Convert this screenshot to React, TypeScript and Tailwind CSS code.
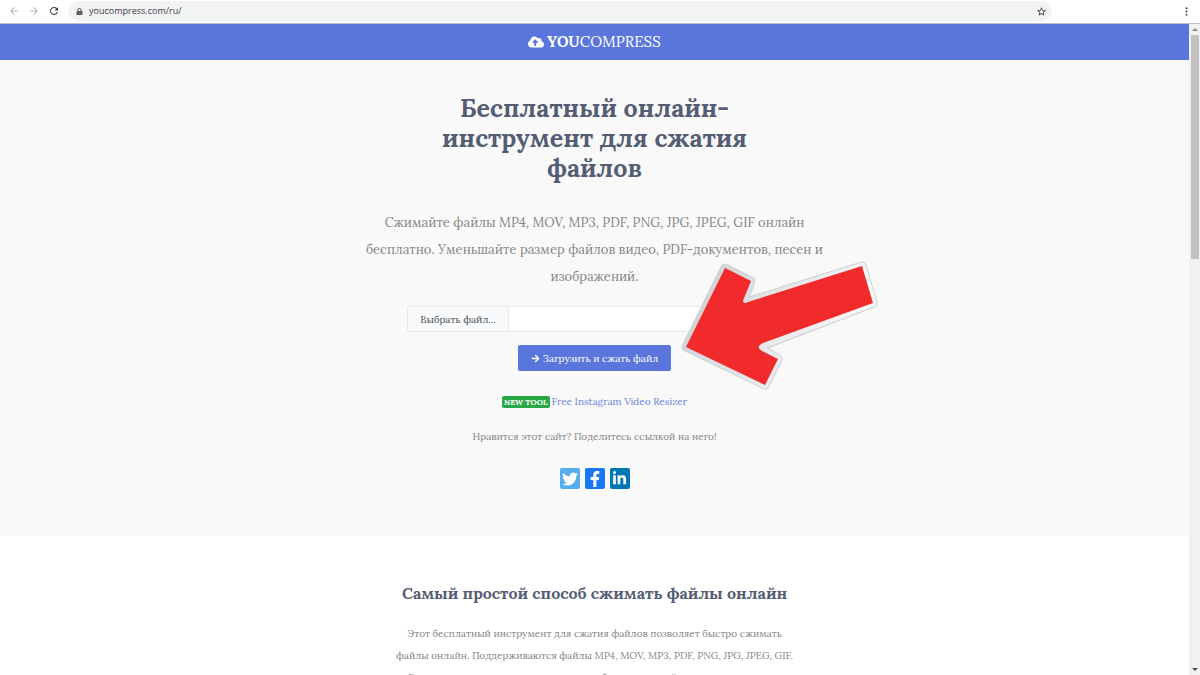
import type { ReactNode } from "react";
import { FaArrowRight, FaCloudUploadAlt, FaFacebookF, FaLinkedinIn, FaLock, FaTwitter } from "react-icons/fa";
import { MdArrowBack, MdArrowForward, MdMoreVert, MdRefresh, MdStarBorder } from "react-icons/md";

function BrowserBar() {
    return (
        <div className="flex h-6 shrink-0 items-center border-b border-[#b9c0d4] bg-white pr-[7px] pb-px pl-2 font-['Open_Sans','Noto_Sans',sans-serif] text-[#5f6368]">
            <button type="button" aria-label="Назад" className="mr-2 text-[#b4b6b9]">
                <MdArrowBack size={12} />
            </button>
            <button type="button" aria-label="Вперёд" className="mr-2 text-[#b4b6b9]">
                <MdArrowForward size={12} />
            </button>
            <button type="button" aria-label="Обновить" className="mr-2 text-[#3c4043]">
                <MdRefresh size={12} />
            </button>
            <div className="mr-32 flex h-5 flex-1 items-center gap-[6px] rounded-full bg-[#f1f3f4] pr-[5px] pl-2">
                <FaLock size={7} />
                <input
                    aria-label="Адрес"
                    defaultValue="youcompress.com/ru/"
                    className="min-w-0 flex-1 bg-transparent text-[9px] text-[#3c4043] outline-none"
                />
                <button type="button" aria-label="Добавить в закладки" className="text-[#3c4043]">
                    <MdStarBorder size={11} />
                </button>
            </div>
            <button type="button" aria-label="Меню">
                <MdMoreVert size={13} />
            </button>
        </div>
    );
}

function Scrollbar() {
    return (
        <div aria-hidden="true" className="flex w-[11px] shrink-0 flex-col items-center bg-[#f1f1f1]">
            <div className="flex h-[11px] items-center">
                <div className="border-x-3 border-b-3 border-x-transparent border-b-[#8a8a8a]" />
            </div>
            <div className="h-56 w-2 bg-[#c1c1c1]" />
            <div className="mt-auto flex h-3 items-center">
                <div className="border-x-3 border-t-3 border-x-transparent border-t-[#505050]" />
            </div>
        </div>
    );
}

function PointerArrow() {
    const points = "44,8 70,21 62,43 181,6 192,43 78,87 97,99 84,125 5,87";

    return (
        <svg
            aria-hidden="true"
            viewBox="0 0 200 135"
            className="pointer-events-none absolute top-[200px] left-[calc(50%+86px)] w-[200px] overflow-visible"
        >
            <defs>
                <linearGradient id="arrow-edge" x1="0" y1="0" x2="1" y2="0.3">
                    <stop offset="0" stopColor="#c9ccd0" />
                    <stop offset="0.5" stopColor="#e3e5e7" />
                    <stop offset="1" stopColor="#fafafa" />
                </linearGradient>
            </defs>
            <polygon points={points} fill="none" stroke="#cfcfd1" strokeWidth="9" strokeLinejoin="round" />
            <polygon points={points} fill="none" stroke="url(#arrow-edge)" strokeWidth="7" strokeLinejoin="round" />
            <path
                d="M44 8 L70 21 L63 38 Q60 45 67 42 L181 6 L192 43 L82 83 Q74 87 81 91 L97 99 L84 125 L5 87 Z"
                fill="#f12b2b"
            />
        </svg>
    );
}

function ShareLink({ label, className, children }: { label: string; className: string; children: ReactNode }) {
    return (
        <a href="#" aria-label={label} className={`flex h-[21px] w-5 items-center justify-center rounded-xs text-white ${className}`}>
            {children}
        </a>
    );
}

function Hero() {
    return (
        <section className="relative flex flex-col items-center bg-[#f9f9f9] pt-[33px] pb-[47px] text-center">
            <h1 className="max-w-[340px] text-[25px] leading-[30px] font-bold text-[#555d75]">
                Бесплатный онлайн-инструмент для сжатия файлов
            </h1>
            <p className="mt-[26px] max-w-[470px] text-[13px] leading-[27px] text-[#858585]">
                Сжимайте файлы MP4, MOV, MP3, PDF, PNG, JPG, JPEG, GIF онлайн бесплатно. Уменьшайте размер файлов видео,
                PDF-документов, песен и изображений.
            </p>

            <form className="mt-4 flex flex-col items-center">
                <label className="flex h-[26px] w-[375px] rounded-xs border border-[#e6e9ee] bg-white text-[10px] text-[#495057]">
                    <span className="flex w-[101px] items-center justify-center border-r border-[#e6e9ee] bg-[#f9fafb]">
                        Выбрать файл...
                    </span>
                    <input type="file" className="sr-only" />
                </label>
                <button
                    type="button"
                    className="mt-[13px] flex h-[26px] w-[153px] items-center justify-center gap-[3px] rounded-xs bg-[#5a76dd] text-[10px] text-white"
                >
                    <FaArrowRight size={9} />
                    Загрузить и сжать файл
                </button>
            </form>

            <p className="mt-[21px] flex items-center gap-[2px] text-[10px] leading-5">
                <span className="rounded-xs bg-[#28a745] px-[2px] text-[8px] leading-3 font-bold text-white">NEW TOOL</span>
                <a href="#" className="text-[#6a83e0]">
                    Free Instagram Video Resizer
                </a>
            </p>
            <p className="mt-[15px] text-[10px] leading-5 text-[#858585]">
                Нравится этот сайт? Поделитесь ссылкой на него!
            </p>

            <div className="mt-[21px] flex gap-[5px]">
                <ShareLink label="Twitter" className="bg-[#55acee]">
                    <FaTwitter size={16} />
                </ShareLink>
                <ShareLink label="Facebook" className="bg-[#1877f2]">
                    <FaFacebookF size={16} />
                </ShareLink>
                <ShareLink label="LinkedIn" className="bg-[#0077b5]">
                    <FaLinkedinIn size={15} />
                </ShareLink>
            </div>

            <PointerArrow />
        </section>
    );
}

function About() {
    return (
        <section className="flex flex-col items-center bg-white pt-[45px] text-center">
            <h2 className="text-base leading-6 font-bold text-[#555d75]">Самый простой способ сжимать файлы онлайн</h2>
            <p className="mt-[18px] max-w-[405px] text-[10px] leading-[22px] text-[#858585]">
                Этот бесплатный инструмент для сжатия файлов позволяет быстро сжимать файлы онлайн. Поддерживаются файлы
                MP4, MOV, MP3, PDF, PNG, JPG, JPEG, GIF. Вам не нужно ничего устанавливать: выберите нужный материал и нажмите
                кнопку.
            </p>
        </section>
    );
}

export default function App() {
    return (
        <div className="flex h-screen flex-col overflow-hidden bg-white">
            <BrowserBar />
            <div className="flex min-h-0 flex-1">
                <main className="min-w-0 flex-1 overflow-hidden font-['Lora','Liberation_Serif',serif]">
                    <header className="flex h-9 items-center justify-center bg-[#5a76dd] text-white">
                        <a href="#" className="flex items-center gap-[3px] text-[15px]">
                            <FaCloudUploadAlt size={16} />
                            <span>
                                <b>YOU</b>COMPRESS
                            </span>
                        </a>
                    </header>
                    <Hero />
                    <About />
                </main>
                <Scrollbar />
            </div>
        </div>
    );
}
